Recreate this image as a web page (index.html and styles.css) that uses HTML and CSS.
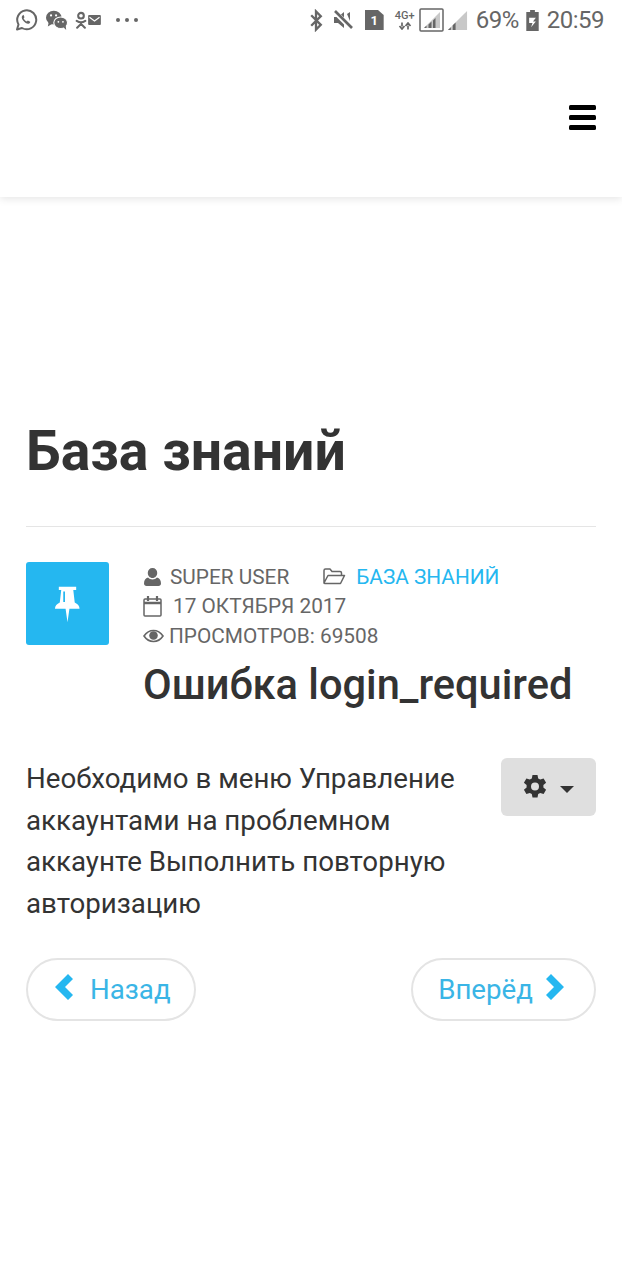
FILE: index.html
```html
<!DOCTYPE html>
<html lang="ru">
<head>
<meta charset="utf-8">
<title>Ошибка login_required</title>
<link rel="stylesheet" href="styles.css">
</head>
<body>
<div class="status">
  <div class="status-left">
    <svg class="ic-wa" viewBox="0 0 24 24"><path d="M3 21.5l1.5-5A9.5 9.5 0 1 1 8 20z" fill="none" stroke="#666" stroke-width="2" stroke-linejoin="round"/><path d="M8.5 7.5c-1.2 1-1 3 .8 5.3 2 2.4 4.3 3.6 5.8 2.8.8-.4 1.2-1.2 1.1-1.8l-2.4-1.3-1 1c-1.400-.5-2.600-1.800-3.200-3.200l.9-1-1-2.600z" fill="#666"/></svg>
    <svg class="ic-wc" viewBox="0 0 26 24"><ellipse cx="9.500" cy="9.500" rx="8.500" ry="7.500" fill="#666"/><path d="M4 14l-1 5 5-3z" fill="#666"/><ellipse cx="17" cy="15" rx="7.500" ry="6.300" fill="#666" stroke="#fff" stroke-width="1.200"/><path d="M20 20l3 3-.500-5z" fill="#666"/><g fill="#fff"><circle cx="6.500" cy="7" r="1.200"/><circle cx="12" cy="7" r="1.200"/><circle cx="14.500" cy="14" r="1"/><circle cx="19.500" cy="14" r="1"/></g></svg>
    <svg class="ic-ok" viewBox="0 0 14 20"><circle cx="7" cy="5" r="3.300" fill="none" stroke="#666" stroke-width="2.400"/><path d="M2 11c3 2 7 2 10 0M7 13v1.500M2.500 19L7 14.500l4.500 4.500" fill="none" stroke="#666" stroke-width="2.400" stroke-linecap="round"/></svg>
    <svg class="ic-mail" viewBox="0 0 14 11"><rect width="14" height="11" rx="1" fill="#666"/><path d="M1.500 2.500L7 6.500l5.500-4" fill="none" stroke="#fff" stroke-width="1.300"/></svg>
    <span class="dots"><i></i><i></i><i></i></span>
  </div>
  <div class="status-right">
    <svg class="ic-bt" viewBox="0 0 14 24"><path d="M2 6.500l10 10L7 21.500V2.500l5 5-10 10" fill="none" stroke="#666" stroke-width="2.400"/></svg>
    <svg class="ic-mute" viewBox="0 0 22 22"><path d="M2 8h4l6-5v16l-6-5H2z" fill="#666"/><path d="M2 2l18 18" stroke="#fff" stroke-width="5"/><path d="M3 2l17 17" stroke="#666" stroke-width="2.600"/><path d="M15 5l3-2v9z" fill="#666"/></svg>
    <span class="sim">1</span>
    <span class="net"><span class="net-label">4G+</span><svg class="ic-arrows" viewBox="0 0 14 7"><path d="M4 0v4M1.500 3.500L4 6.500l2.500-3M10 7V3M7.500 3.500L10 .5l2.500 3" fill="none" stroke="#666" stroke-width="1.700"/></svg></span>
    <svg class="ic-sig-box" viewBox="0 0 25 24"><rect x="1" y="1" width="23" height="22" rx="1" fill="none" stroke="#666" stroke-width="1.500"/><path d="M21 4v16H5z" fill="#c8c8c8"/><path d="M5 20h2.500v-2.500L5 20zM9.500 20h3v-6.500l-3 3zM14 20h2.500V10l-2.500 2.500z" fill="#666"/></svg>
    <svg class="ic-sig" viewBox="0 0 22 22"><path d="M21 1v20H1z" fill="#c8c8c8"/><path d="M1 21h3v-3zM6 21h3v-8l-3 3z" fill="#666"/></svg>
    <span class="pct">69%</span>
    <svg class="ic-bat" viewBox="0 0 13 22"><path d="M4 0h5v2h4v20H0V2h4z" fill="#666"/><path d="M3 8h7l-3 4h3l-5 6 1.500-4.500H3z" fill="#fff"/></svg>
    <span class="clock">20:59</span>
  </div>
</div>

<header class="topbar">
  <button class="burger" aria-label="Меню"><i></i><i></i><i></i></button>
</header>

<main class="page">
  <h1 class="page-title">База знаний</h1>
  <div class="article-head">
    <div class="badge">
      <svg viewBox="0 0 28 38"><path d="M5 1h18v3.500h-3l1.500 13c3 1.500 5 3.500 5 6.500H16l-2 14-2-14H1c0-3 2-5 5-6.500L7.500 4.500H5z" fill="#fff"/><path d="M10.500 6v11" stroke="#25b7f0" stroke-width="1.800"/></svg>
    </div>
    <div class="meta">
      <div class="meta-line">
        <span class="meta-item">
          <svg class="ic-user" viewBox="0 0 17 18"><path d="M8.500 0a4.700 4.700 0 0 1 4.700 5c0 2.700-2 5-4.700 5S3.800 7.700 3.800 5A4.700 4.700 0 0 1 8.500 0zM4 9.500c1 1.200 2.800 2 4.500 2s3.500-.8 4.500-2c2.500.5 4 2.800 4 6 0 1.500-1 2.500-2.500 2.500h-12C1 18 0 17 0 15.500c0-3.200 1.500-5.500 4-6z" fill="#666"/></svg>
          SUPER USER
        </span>
        <span class="meta-item cat">
          <svg class="ic-folder" viewBox="0 0 23 17"><path d="M1 15V2.500C1 1.500 1.500 1 2.500 1h4.500l2 2.500h8c1 0 1.500.5 1.500 1.500v2.500M1 15l4-7.500h16.500l-4 8H2c-.5 0-1-.2-1-.5z" fill="none" stroke="#666" stroke-width="1.500" stroke-linejoin="round"/></svg>
          <a class="cat-link" href="#">БАЗА ЗНАНИЙ</a>
        </span>
      </div>
      <div class="meta-line">
        <span class="meta-item date">
          <svg class="ic-cal" viewBox="0 0 19 21"><rect x="1" y="3" width="17" height="17" rx="1" fill="none" stroke="#666" stroke-width="1.500"/><path d="M1 7h17" stroke="#666" stroke-width="2.500"/><path d="M5 0v5M14 0v5" stroke="#666" stroke-width="2.200"/></svg>
          17 ОКТЯБРЯ 2017
        </span>
      </div>
      <div class="meta-line">
        <span class="meta-item views">
          <svg class="ic-eye" viewBox="0 0 21 14"><path d="M1 7c2.500-3.700 5.700-5.500 9.500-5.500S17.500 3.300 20 7c-2.500 3.700-5.700 5.500-9.500 5.500S3.500 10.700 1 7z" fill="none" stroke="#666" stroke-width="1.600"/><circle cx="10.500" cy="6.500" r="4.300" fill="#666"/></svg>
          ПРОСМОТРОВ: 69508
        </span>
      </div>
      <h2 class="article-title">Ошибка login_required</h2>
    </div>
  </div>

  <div class="article-body">
    <button class="tools" aria-label="Действия">
      <svg class="ic-gear" viewBox="0 0 24 24"><path fill-rule="evenodd" d="M9.500 0h5l.7 3.500 2 1.100L20.600 3.400l2.500 4.300-2.700 2.400v2.300l2.700 2.400-2.500 4.300-3.400-1.200-2 1.100-.7 3.500h-5l-.7-3.500-2-1.100-3.400 1.200L.9 14.800l2.700-2.400v-2.300L.9 7.700l2.500-4.300 3.400 1.200 2-1.100zM12 7.500a4 4 0 1 0 0 8 4 4 0 0 0 0-8z" fill="#333"/></svg>
      <span class="caret"></span>
    </button>
    <p class="article-text">Необходимо в меню Управление аккаунтами на проблемном аккаунте Выполнить повторную авторизацию</p>
  </div>

  <nav class="pager">
    <a class="pager-btn" href="#">
      <svg class="ic-chev" viewBox="0 0 20 26"><path d="M11 0l5 5-8 8 8 8-5 5L-2 13z" fill="#25b7f0" transform="translate(3 0)"/></svg>
      <span>Назад</span>
    </a>
    <a class="pager-btn next" href="#">
      <span>Вперёд</span>
      <svg class="ic-chev" viewBox="0 0 20 26"><path d="M9 0L4 5l8 8-8 8 5 5 13-13z" fill="#25b7f0" transform="translate(-3 0)"/></svg>
    </a>
  </nav>
</main>
</body>
</html>
```

FILE: styles.css
```css
* { box-sizing: border-box; }
html, body { margin: 0; padding: 0; background: #fff; }
body { font-family: Roboto, "Liberation Sans", sans-serif; color: #333; width: 622px; height: 1280px; overflow: hidden; }

.status { position: relative; z-index: 1; height: 40px; background: #fff; display: flex; justify-content: space-between; align-items: center; padding: 0 18px 0 14px; color: #666; }
.status-left, .status-right { display: flex; align-items: center; }
.ic-wa { width: 24px; height: 24px; }
.ic-wc { width: 24px; height: 22px; margin-left: 7px; }
.ic-ok { width: 12px; height: 18px; margin-left: 6px; }
.ic-mail { width: 13px; height: 10px; margin-left: 1px; }
.dots { display: flex; gap: 5px; margin-left: 15px; }
.dots i { width: 4px; height: 4px; border-radius: 50%; background: #666; }

.ic-bt { width: 14px; height: 23px; }
.ic-mute { width: 22px; height: 22px; margin-left: 9px; }
.sim { width: 19px; height: 20px; margin-left: 11px; background: #666; color: #fff; font-size: 13px; font-weight: 700; line-height: 21px; text-align: center; clip-path: polygon(0 0, 70% 0, 100% 25%, 100% 100%, 0 100%); }
.net { width: 22px; margin-left: 10px; display: flex; flex-direction: column; align-items: center; }
.net-label { font-size: 11px; font-weight: 500; line-height: 12px; white-space: nowrap; }
.ic-arrows { width: 14px; height: 8px; }
.ic-sig-box { width: 25px; height: 24px; margin-left: 3px; }
.ic-sig { width: 21px; height: 21px; margin-left: 3px; }
.pct { font-size: 24px; margin-left: 8px; letter-spacing: -.5px; }
.ic-bat { width: 13px; height: 21px; margin-left: 7px; }
.clock { font-size: 24px; margin-left: 8px; letter-spacing: -.5px; }

.topbar { height: 157px; display: flex; justify-content: flex-end; padding: 65px 26px 0 0; box-shadow: 0 2px 8px rgba(0,0,0,.1); }
.burger { width: 27px; height: 25px; padding: 0; border: 0; background: none; display: flex; flex-direction: column; justify-content: space-between; }
.burger i { display: block; height: 5px; width: 100%; background: #000; border-radius: 1.500px; }

.page { padding: 0 26px; }
.page-title { margin: 0; padding-top: 225px; padding-bottom: 44px; font-size: 55.400px; line-height: 60px; font-weight: 700; color: #333; border-bottom: 1px solid #e5e5e5; }

.article-head { display: flex; gap: 35px; padding-top: 35px; }
.badge { flex: none; width: 83px; height: 83px; background: #25b7f0; border-radius: 3px; display: flex; align-items: center; justify-content: center; }
.badge svg { width: 27px; height: 38px; }
.meta { flex: 1; min-width: 0; }
.meta-line { height: 29.500px; display: flex; align-items: center; font-size: 20.800px; color: #666; gap: 34px; white-space: nowrap; }
.meta-item { display: flex; align-items: center; gap: 9px; }
.ic-user { width: 17px; height: 18px; }
.ic-folder { width: 23px; height: 17px; }
.cat { gap: 10px; }
.cat-link { color: #25b7f0; text-decoration: none; }
.ic-cal { width: 19px; height: 21px; margin-left: -1px; }
.date { gap: 11px; }
.ic-eye { width: 21px; height: 14px; margin-left: -1px; }
.views { gap: 5px; }
.article-title { margin: 8px 0 0 -1px; font-size: 41.600px; line-height: 52px; font-weight: 500; color: #333; white-space: nowrap; }

.article-body { margin-top: 47.500px; }
.tools { float: right; width: 95px; height: 58px; margin: 0 0 20px 20px; border: 0; border-radius: 6px; background: #dfdfdf; display: flex; align-items: center; justify-content: center; gap: 13px; padding: 0; }
.ic-gear { width: 24px; height: 24px; }
.caret { width: 0; height: 0; border-left: 7px solid transparent; border-right: 7px solid transparent; border-top: 7px solid #333; margin-top: 4px; }
.article-text { margin: 0; font-size: 27.700px; line-height: 41.600px; color: #333; }

.pager { display: flex; justify-content: space-between; margin-top: 34px; }
.pager-btn { height: 63px; display: flex; align-items: center; gap: 16px; padding: 0 23px 0 26px; border: 2px solid #e4e4e4; border-radius: 32px; background: #fff; font-size: 27.700px; color: #3ab5e6; text-decoration: none; }
.next { gap: 12px; padding: 0 29px 0 25px; }
.ic-chev { width: 20px; height: 26px; margin-top: -5px; }
```
